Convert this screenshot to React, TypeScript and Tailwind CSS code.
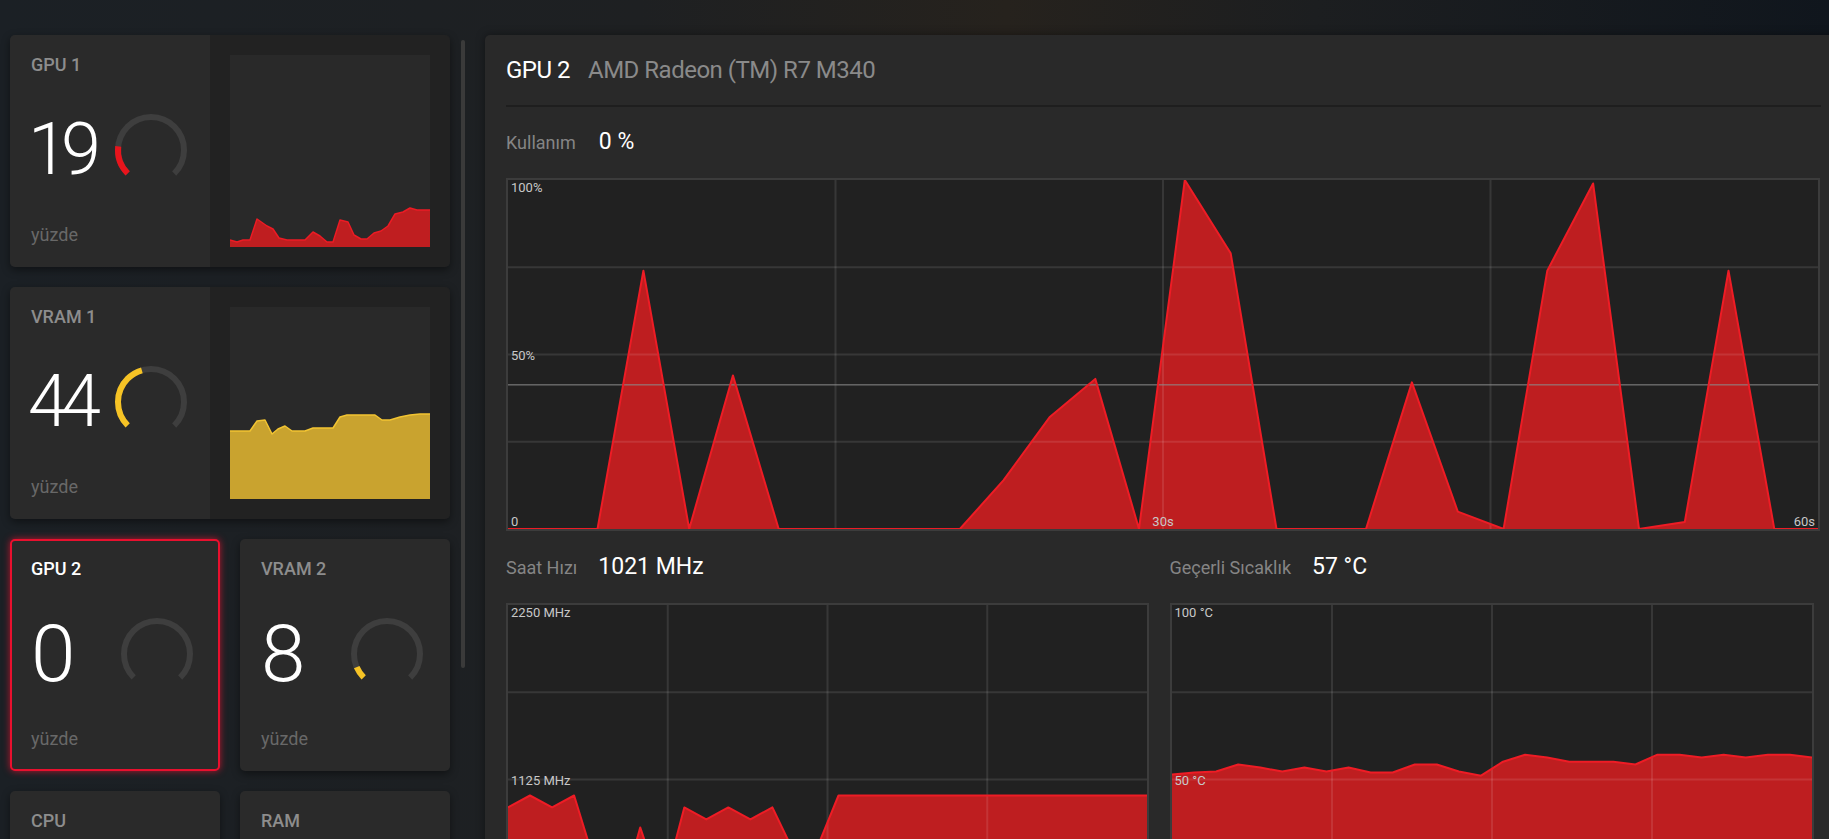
import React from 'react';

type Pt = [number, number];

const gpu1Mini: Pt[] = [
  [0, 7], [7, 5], [13, 7], [20, 7], [27, 28], [37, 21], [43, 18], [49, 9], [57, 7], [75, 7],
  [83, 15], [90, 11], [97, 5], [103, 5], [110, 27], [118, 25], [124, 12], [131, 8], [137, 8],
  [144, 14], [151, 16], [158, 21], [165, 33], [173, 35], [180, 39], [187, 37], [200, 37],
];

const vram1Mini: Pt[] = [
  [0, 68], [20, 68], [27, 78], [35, 79], [42, 65], [48, 70], [55, 73], [62, 68], [75, 68],
  [83, 71], [103, 71], [110, 82], [117, 84], [145, 84], [152, 79], [160, 79], [170, 82],
  [180, 84], [190, 85], [200, 85],
];

const usage: Pt[] = [
  [0, 0], [4.1, 0], [6.2, 74], [8.3, 0], [10.3, 44], [12.4, 0], [20.7, 0], [22.7, 14],
  [24.8, 32], [26.9, 43], [28.9, 0], [31.0, 100], [33.1, 79], [35.2, 0], [39.3, 0],
  [41.4, 42], [43.5, 5], [45.6, 0], [47.6, 74], [49.7, 99], [51.8, 0], [53.9, 2],
  [55.9, 74], [58.0, 0], [60, 0],
];

const clock = [945, 1022, 945, 1022, 560, 300, 816, 400, 945, 868, 945, 868, 945, 650, 675,
  1022, 1022, 1022, 1022, 1022, 1022, 1022, 1022, 1022, 1022, 1022, 1022, 1022, 1022, 1022];

const temp = [51.4, 52, 52.3, 54.3, 53.4, 52.3, 53.4, 52.3, 53.4, 52, 52, 54.3, 54.3, 52.3, 51.1,
  55.1, 57.1, 56.3, 55.1, 55.1, 55.1, 54.3, 57.1, 57.1, 56.3, 57.1, 56.3, 57.1, 57.1, 56.3];

const series = (vals: number[]): Pt[] => vals.map((v, i) => [(i / (vals.length - 1)) * 60, v]);

function paths(pts: Pt[], w: number, h: number, xMax: number, yMax: number) {
  const line = pts
    .map(([x, y], i) => `${i ? 'L' : 'M'}${((x / xMax) * w).toFixed(1)},${(h - (y / yMax) * h).toFixed(1)}`)
    .join(' ');
  return { line, area: `${line} L${w},${h} L0,${h} Z` };
}

function Gauge({ value, color }: { value: number; color: string }) {
  const r = 33;
  const c = 2 * Math.PI * r;
  const arc = c * 0.75;
  return (
    <svg width="76" height="76" viewBox="0 0 76 76" className="shrink-0">
      <circle cx="38" cy="38" r={r} fill="none" stroke="#3e3e3e" strokeWidth="6"
        strokeDasharray={`${arc} ${c}`} transform="rotate(135 38 38)" />
      {value > 0 && (
        <circle cx="38" cy="38" r={r} fill="none" stroke={color} strokeWidth="6"
          strokeDasharray={`${(arc * value) / 100} ${c}`} transform="rotate(135 38 38)" />
      )}
    </svg>
  );
}

function MiniChart({ pts, fill, stroke }: { pts: Pt[]; fill: string; stroke: string }) {
  const { line, area } = paths(pts, 200, 192, 200, 192);
  return (
    <div className="w-[200px] h-[192px] bg-[#292929]">
      <svg width="200" height="192" viewBox="0 0 200 192">
        <path d={area} fill={fill} />
        <path d={line} fill="none" stroke={stroke} strokeWidth="1.5" strokeLinejoin="round" />
      </svg>
    </div>
  );
}

function CardBody({ label, value, gauge, color, active, wide }: {
  label: string; value: string; gauge: number; color: string; active?: boolean; wide?: boolean;
}) {
  return (
    <div className={`h-full flex flex-col justify-between ${wide ? 'px-[21px] pt-[21px] pb-[23px]' : 'pl-[19px] pr-[23px] pt-[19px] pb-[21px]'}`}>
      <div className={`text-[18px] leading-none font-medium ${active ? 'text-white' : 'text-[#8d8d8d]'}`}>{label}</div>
      <div className="flex items-center justify-between">
        <span className={`leading-none font-light text-white ${wide ? 'text-[72px] tracking-[-7px] -ml-[3px]' : 'text-[80px] tracking-[-3px]'}`}>{value}</span>
        <Gauge value={gauge} color={color} />
      </div>
      <div className="text-[18px] leading-none text-[#686868]">yüzde</div>
    </div>
  );
}

function WideCard(props: { label: string; value: string; gauge: number; color: string; pts: Pt[]; fill: string; stroke: string }) {
  return (
    <div className="flex h-[232px] rounded-[5px] overflow-hidden shadow-[0_3px_8px_rgba(0,0,0,0.45)]">
      <div className="w-[200px] bg-[#2a2a2a]">
        <CardBody label={props.label} value={props.value} gauge={props.gauge} color={props.color} wide />
      </div>
      <div className="w-[240px] bg-[#222222] p-[20px]">
        <MiniChart pts={props.pts} fill={props.fill} stroke={props.stroke} />
      </div>
    </div>
  );
}

function SmallCard({ label, value, gauge, color, active }: { label: string; value: string; gauge: number; color: string; active?: boolean }) {
  return (
    <div className={`h-[232px] rounded-[5px] bg-[#2a2a2a] border-2 ${active ? 'border-[#e8102e] shadow-[0_0_7px_rgba(235,20,50,0.75)]' : 'border-transparent shadow-[0_3px_8px_rgba(0,0,0,0.45)]'}`}>
      <CardBody label={label} value={value} gauge={gauge} color={color} active={active} />
    </div>
  );
}

// cards below the fold: only the heading is visible
function StubCard({ label }: { label: string }) {
  return (
    <div className="h-[232px] rounded-[5px] bg-[#2a2a2a] border-2 border-transparent pl-[19px] pt-[19px] shadow-[0_3px_8px_rgba(0,0,0,0.45)]">
      <div className="text-[18px] leading-none font-medium text-[#8d8d8d]">{label}</div>
    </div>
  );
}

function BigChart({ w, h, pts, yMax, fill, stroke, avg, labels }: {
  w: number; h: number; pts: Pt[]; yMax: number; fill: string; stroke: string; avg?: number;
  labels: { top: string; mid: string; zero?: string; half?: string; end?: string };
}) {
  const { line, area } = paths(pts, w, h, 60, yMax);
  const grid = 'rgba(255,255,255,0.1)';
  return (
    <div className="relative border-2 border-[#3c3c3c] bg-[#212121]" style={{ width: w + 4, height: h + 4 }}>
      <svg width={w} height={h} viewBox={`0 0 ${w} ${h}`} className="block">
        <path d={area} fill={fill} />
        {[1, 2, 3].map((k) => (
          <g key={k}>
            <line x1={(w * k) / 4} y1="0" x2={(w * k) / 4} y2={h} stroke={grid} strokeWidth="2" />
            <line x1="0" y1={(h * k) / 4} x2={w} y2={(h * k) / 4} stroke={grid} strokeWidth="2" />
          </g>
        ))}
        {avg !== undefined && (
          <line x1="0" y1={h - (avg / yMax) * h} x2={w} y2={h - (avg / yMax) * h} stroke="#8c8c8c" strokeWidth="1" />
        )}
        <path d={line} fill="none" stroke={stroke} strokeWidth="2" strokeLinejoin="round" />
      </svg>
      <span className="absolute left-[3px] top-[1px] text-[13px] leading-none text-[#c8c8c8]">{labels.top}</span>
      <span className="absolute left-[3px] top-1/2 -translate-y-1/2 text-[13px] leading-none text-[#c8c8c8]">{labels.mid}</span>
      {labels.zero && <span className="absolute left-[3px] bottom-[1px] text-[13px] leading-none text-[#c8c8c8]">{labels.zero}</span>}
      {labels.half && <span className="absolute left-1/2 -translate-x-1/2 bottom-[1px] text-[13px] leading-none text-[#c8c8c8]">{labels.half}</span>}
      {labels.end && <span className="absolute right-[3px] bottom-[1px] text-[13px] leading-none text-[#c8c8c8]">{labels.end}</span>}
    </div>
  );
}

function Stat({ label, value }: { label: string; value: string }) {
  return (
    <div className="h-[72px] flex items-center gap-[21px]">
      <span className="text-[18px] text-[#858585]">{label}</span>
      <span className="text-[23px] text-white">{value}</span>
    </div>
  );
}

export default function App() {
  return (
    <div className="w-[1829px] h-[839px] overflow-hidden flex items-start pt-[35px] pl-[10px] font-['Roboto',sans-serif] bg-[linear-gradient(90deg,#1b2025_0%,#1e2022_35%,#26221d_55%,#1c1e20_72%,#10161d_100%)]">
      <div className="w-[440px] shrink-0 flex flex-col gap-5">
        <WideCard label="GPU 1" value="19" gauge={19} color="#e8141c" pts={gpu1Mini} fill="#bf1e20" stroke="#ec1b24" />
        <WideCard label="VRAM 1" value="44" gauge={44} color="#f6c325" pts={vram1Mini} fill="#c9a32f" stroke="#f2c432" />
        <div className="grid grid-cols-2 gap-5">
          <SmallCard label="GPU 2" value="0" gauge={0} color="#e8141c" active />
          <SmallCard label="VRAM 2" value="8" gauge={8} color="#f6c325" />
          <StubCard label="CPU" />
          <StubCard label="RAM" />
        </div>
      </div>

      <div className="ml-[11px] mt-[5px] w-[4px] h-[628px] rounded-full bg-[#3a3a3a] shrink-0" />

      <div className="ml-[20px] w-[1360px] shrink-0 h-[900px] bg-[#292929] rounded-tl-[5px] px-[21px] shadow-[0_0_10px_rgba(0,0,0,0.4)]">
        <div className="h-[70px] flex items-center gap-[18px] text-[24px] tracking-[-0.5px]">
          <span className="text-white">GPU 2</span>
          <span className="text-[#8a8a8a]">AMD Radeon (TM) R7 M340</span>
        </div>
        <div className="h-[2px] w-[1315px] bg-[#1e1e1e]" />
        <div className="h-[71px] flex items-center gap-[23px]">
          <span className="text-[18px] text-[#858585]">Kullanım</span>
          <span className="text-[23px] text-white">0 %</span>
        </div>
        <BigChart w={1310} h={349} pts={usage} yMax={100} fill="#be1e20" stroke="#ee1c25" avg={41.3}
          labels={{ top: '100%', mid: '50%', zero: '0', half: '30s', end: '60s' }} />
        <div className="w-[1307px] grid grid-cols-2 gap-5">
          <div>
            <Stat label="Saat Hızı" value="1021 MHz" />
            <BigChart w={639} h={349} pts={series(clock)} yMax={2250} fill="#be1e20" stroke="#ee1c25"
              labels={{ top: '2250 MHz', mid: '1125 MHz' }} />
          </div>
          <div>
            <Stat label="Geçerli Sıcaklık" value="57 °C" />
            <BigChart w={640} h={349} pts={series(temp)} yMax={100} fill="#be1e20" stroke="#ee1c25"
              labels={{ top: '100 °C', mid: '50 °C' }} />
          </div>
        </div>
      </div>
    </div>
  );
}
